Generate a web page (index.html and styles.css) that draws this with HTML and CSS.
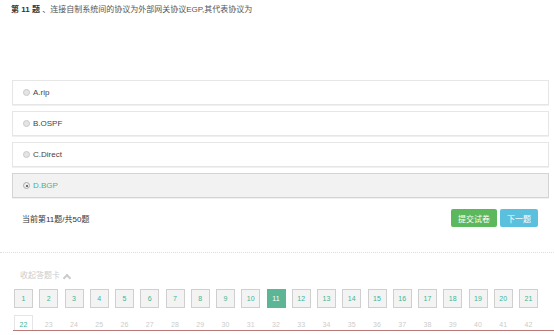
FILE: index.html
```html
<!DOCTYPE html>
<html lang="zh-CN">
<head>
    <meta charset="UTF-8">
    <title>在线考试</title>
    <link rel="stylesheet" href="styles.css">
</head>
<body>
    <div class="question-title">
        <b>第 11 题</b> 、连接自制系统间的协议为外部网关协议EGP,其代表协议为
    </div>

    <div class="options">
        <label class="option"><span class="radio"></span>A.rip</label>
        <label class="option"><span class="radio"></span>B.OSPF</label>
        <label class="option"><span class="radio"></span>C.Direct</label>
        <label class="option selected"><span class="radio checked"></span>D.BGP</label>
    </div>

    <div class="exam-bar">
        <span class="progress">当前第11题/共50题</span>
        <div class="actions">
            <button class="btn success">提交试卷</button>
            <button class="btn info">下一题</button>
        </div>
    </div>

    <div class="card-toggle">收起答题卡 <span class="caret"></span></div>

    <div class="card">
        <div class="card-grid" id="card-grid"></div>
    </div>

    <script>
        var grid = document.getElementById('card-grid');
        for (var i = 1; i <= 50; i++) {
            var cell = document.createElement('span');
            cell.className = 'cell';
            if (i <= 10 || (i >= 12 && i <= 21)) cell.className += ' done';
            if (i == 11) cell.className += ' current';
            if (i == 22) cell.className += ' next';
            cell.textContent = i;
            grid.appendChild(cell);
        }
    </script>
</body>
</html>
```

FILE: styles.css
```css
body {
    margin: 0;
    font-family: "Liberation Sans", Arial, "Noto Sans CJK SC", sans-serif;
    font-size: 8px;
    color: #555;
    background: #fff;
}

.question-title {
    padding: 5px 11px 0;
    line-height: 10px;
    color: #555;
}

.question-title b {
    color: #333;
}

.options {
    margin: 65px 5px 0 12px;
    display: flex;
    flex-direction: column;
    gap: 6px;
}

.option {
    height: 25px;
    box-sizing: border-box;
    display: flex;
    align-items: center;
    gap: 3px;
    padding-left: 10px;
    border: 1px solid #e6e6e6;
    box-shadow: 0 1px 0 #f0f0f0;
    color: #444;
}

.option.selected {
    background: #f2f2f2;
    border-color: #d4d4d4;
    color: #3db594;
}

.radio {
    width: 7px;
    height: 7px;
    box-sizing: border-box;
    border-radius: 50%;
    border: 1px solid #c8c8c8;
    background: #e4e4e4;
    position: relative;
}

.radio.checked {
    background: #eee;
    border-color: #aaa;
}

.radio.checked::after {
    content: "";
    position: absolute;
    left: 1.5px;
    top: 1.5px;
    width: 2px;
    height: 2px;
    border-radius: 50%;
    background: #444;
}

.exam-bar {
    margin-top: 11px;
    height: 18px;
    display: flex;
    justify-content: space-between;
    align-items: center;
    padding: 0 16px 0 22px;
    color: #333;
}

.actions {
    display: flex;
    gap: 3px;
}

.btn {
    height: 18px;
    padding: 0 7px;
    border: none;
    border-radius: 2px;
    font-family: inherit;
    font-size: 8px;
    color: #fff;
}

.btn.success {
    background: #5cb85c;
}

.btn.info {
    background: #5bc0de;
}

.card-toggle {
    margin-top: 25px;
    border-top: 1px dotted #ddd;
    padding: 18px 0 0 20px;
    line-height: 10px;
    color: #ccc;
    display: flex;
    align-items: center;
    gap: 4px;
}

.caret {
    width: 4px;
    height: 4px;
    border-left: 2px solid #ccc;
    border-top: 2px solid #ccc;
    transform: rotate(45deg);
    margin-top: 3px;
}

.card {
    margin: 8px 0 0 13px;
    padding-left: 1px;
    height: 41px;
    overflow: hidden;
    border-bottom: 1px solid #b87878;
}

.card-grid {
    display: grid;
    grid-template-columns: repeat(21, 19px);
    column-gap: 6.25px;
    row-gap: 6.5px;
}

.cell {
    height: 19px;
    box-sizing: border-box;
    display: flex;
    align-items: center;
    justify-content: center;
    font-size: 7px;
    color: #ccc;
    border: 1px solid transparent;
}

.cell.done {
    background: #f3f3f3;
    border-color: #cfcfcf;
    color: #3db594;
}

.cell.current {
    background: #5cb594;
    border-color: #5cb594;
    color: #fff;
}

.cell.next {
    border-color: #e5e5e5;
    color: #3db594;
}
```
